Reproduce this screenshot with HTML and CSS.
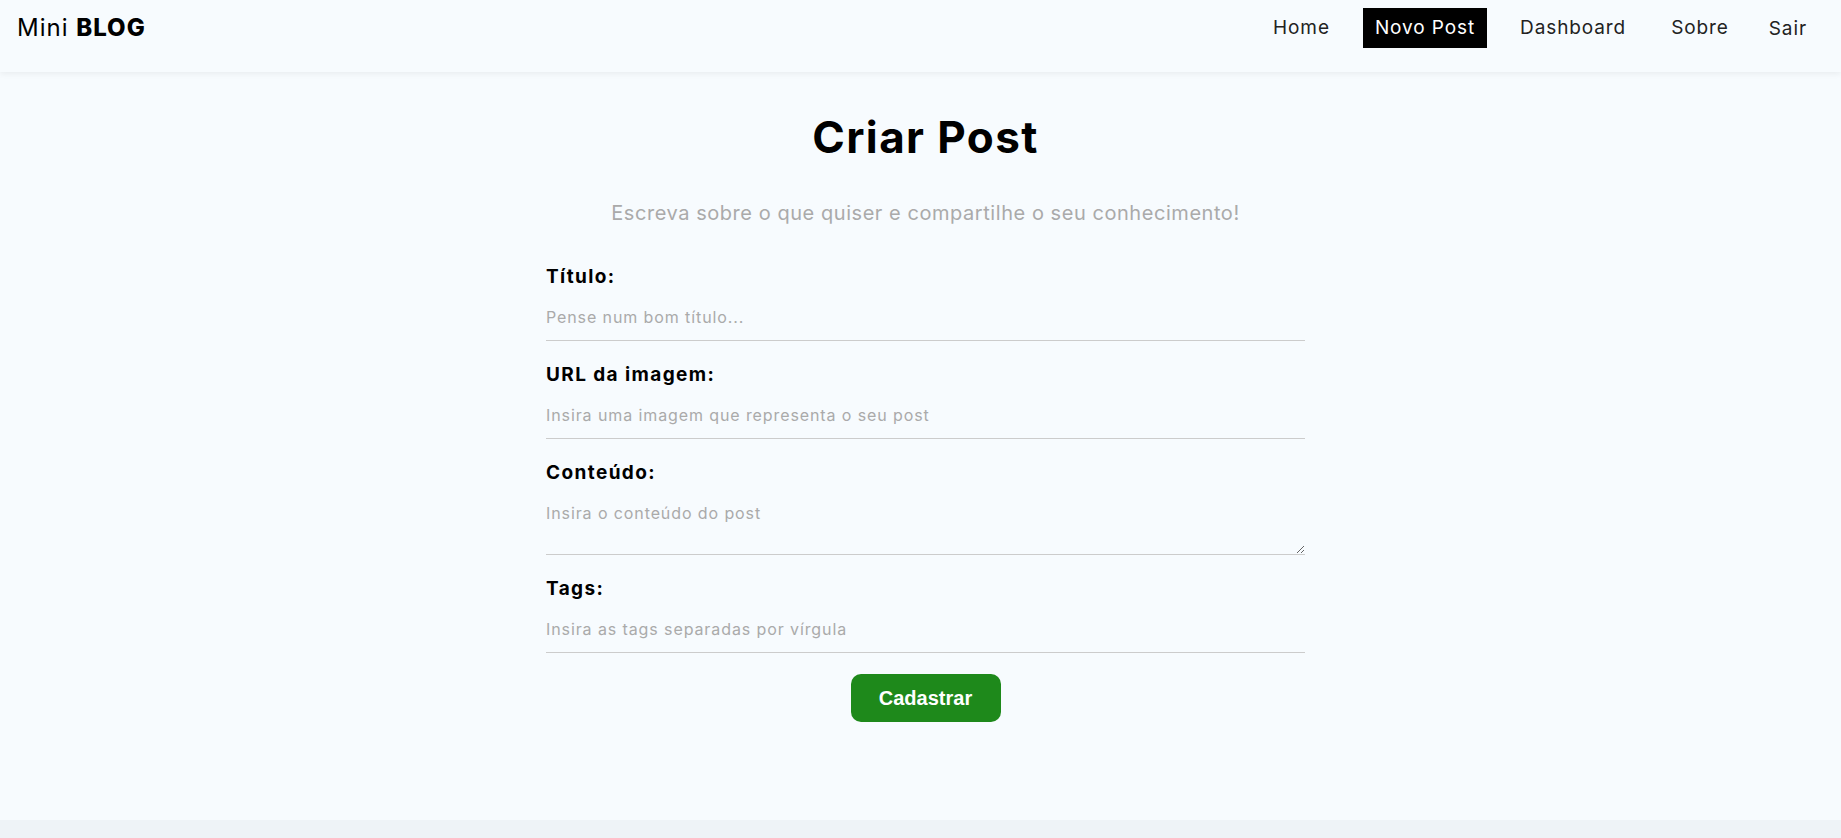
FILE: index.html
```html
<!DOCTYPE html>
<html lang="pt-BR">
<head>
<meta charset="utf-8">
<title>Mini Blog - Criar Post</title>
<link rel="stylesheet" href="styles.css">
</head>
<body>
<nav class="navbar">
  <a class="brand" href="#">Mini <span class="brand-strong">BLOG</span></a>
  <ul class="nav-links">
    <li><a class="nav-link" href="#">Home</a></li>
    <li><a class="nav-link active" href="#">Novo Post</a></li>
    <li><a class="nav-link" href="#">Dashboard</a></li>
    <li><a class="nav-link" href="#">Sobre</a></li>
    <li><button class="nav-button" type="button">Sair</button></li>
  </ul>
</nav>
<main class="main">
  <section class="create-post">
    <h1 class="title">Criar Post</h1>
    <p class="subtitle">Escreva sobre o que quiser e compartilhe o seu conhecimento!</p>
    <form class="form">
      <label class="field">
        <span class="field-label">Título:</span>
        <input class="field-input" type="text" placeholder="Pense num bom título...">
      </label>
      <label class="field">
        <span class="field-label">URL da imagem:</span>
        <input class="field-input" type="text" placeholder="Insira uma imagem que representa o seu post">
      </label>
      <label class="field">
        <span class="field-label">Conteúdo:</span>
        <textarea class="field-input field-textarea" placeholder="Insira o conteúdo do post"></textarea>
      </label>
      <label class="field">
        <span class="field-label">Tags:</span>
        <input class="field-input" type="text" placeholder="Insira as tags separadas por vírgula">
      </label>
      <button class="btn-submit" type="button">Cadastrar</button>
    </form>
  </section>
</main>
<footer class="footer"></footer>
</body>
</html>
```

FILE: styles.css
```css
* {
  box-sizing: border-box;
}

html, body {
  margin: 0;
  padding: 0;
}

body {
  background: #f7fbfe;
  font-family: Inter, "Open Sans", sans-serif;
  color: #000;
}

.navbar {
  height: 72px;
  display: flex;
  justify-content: space-between;
  align-items: flex-start;
  padding: 8px 22px 0 17px;
  background: #f7fbfe;
  box-shadow: 0 2px 6px rgba(0, 0, 0, 0.06);
  position: relative;
  z-index: 1;
}

.brand {
  text-decoration: none;
  color: #000;
  font-size: 24px;
  line-height: 40px;
  letter-spacing: 1px;
}

.brand-strong {
  font-weight: 800;
}

.nav-links {
  list-style: none;
  margin: 0;
  padding: 0;
  display: flex;
  gap: 21px;
}

.nav-link {
  display: block;
  padding: 9px 12px;
  line-height: 22px;
  font-size: 19px;
  color: #222;
  text-decoration: none;
  letter-spacing: 0.9px;
}

.nav-link.active {
  background: #000;
  color: #fff;
}

.nav-button {
  display: block;
  font-family: inherit;
  font-size: 19px;
  line-height: 22px;
  padding: 10px 12px 8px;
  border: none;
  background: transparent;
  color: #222;
  letter-spacing: 0.9px;
  margin-left: -5px;
}

.main {
  min-height: 748px;
  padding-left: 10px;
}

.create-post {
  max-width: 759px;
  margin: 0 auto;
  text-align: center;
  padding-top: 39px;
  padding-bottom: 20px;
}

.title {
  margin: 0;
  font-size: 44px;
  line-height: 53px;
  font-weight: 700;
  letter-spacing: 1.4px;
}

.subtitle {
  margin: 38px 0 40px;
  font-size: 20px;
  line-height: 23px;
  color: #aaa;
  letter-spacing: 0.55px;
}

.form {
  display: flex;
  flex-direction: column;
  align-items: center;
  text-align: left;
}

.field {
  display: flex;
  flex-direction: column;
  width: 100%;
  margin-bottom: 22px;
}

.field-label {
  font-size: 19px;
  line-height: 24px;
  font-weight: 700;
  margin-bottom: 5px;
  letter-spacing: 1.4px;
}

.field-input {
  font-family: inherit;
  font-size: 16px;
  line-height: 19px;
  padding: 14px 0 13px;
  border: none;
  border-bottom: 1px solid #ccc;
  background: transparent;
  outline: none;
  color: #000;
  letter-spacing: 0.9px;
}

.field-input::placeholder {
  color: #aaa;
}

.field-textarea {
  height: 65px;
  resize: both;
}

.btn-submit {
  margin-top: -1px;
  width: 150px;
  height: 48px;
  border: none;
  border-radius: 10px;
  background: #1e891b;
  color: #fff;
  font-family: "Liberation Sans", Arial, sans-serif;
  font-weight: 700;
  font-size: 20px;
}

.footer {
  height: 18px;
  background: #eef3f7;
}
```
